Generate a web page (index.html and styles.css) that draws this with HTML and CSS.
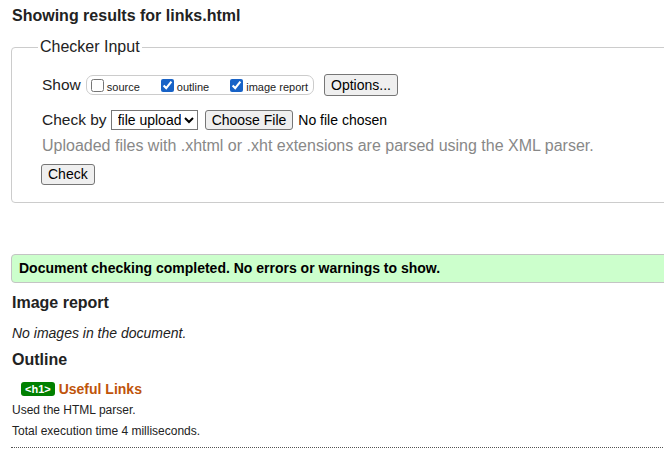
FILE: index.html
```html
<!DOCTYPE html>
<html>
<head>
<meta charset="utf-8">
<title>Showing results for links.html</title>
<link rel="stylesheet" href="styles.css">
</head>
<body>
<div class="page">
  <h2 class="title">Showing results for links.html</h2>
  <fieldset class="checker">
    <legend class="legend">Checker Input</legend>
    <div class="row show-row">
      <span class="label">Show</span>
      <span class="group">
        <label class="opt"><input type="checkbox" class="cb"><span>source</span></label>
        <label class="opt"><input type="checkbox" class="cb" checked><span>outline</span></label>
        <label class="opt"><input type="checkbox" class="cb" checked><span>image report</span></label>
      </span>
      <button class="btn options">Options...</button>
    </div>
    <div class="row by-row">
      <span class="label">Check by</span>
      <select class="sel"><option>file upload</option></select>
      <button class="btn choose">Choose File</button>
      <span class="nofile">No file chosen</span>
    </div>
    <p class="hint">Uploaded files with .xhtml or .xht extensions are parsed using the XML parser.</p>
    <div class="row check-row"><button class="btn check">Check</button></div>
  </fieldset>
  <div class="success">Document checking completed. No errors or warnings to show.</div>
  <h3 class="sub img-head">Image report</h3>
  <p class="noimg">No images in the document.</p>
  <h3 class="sub outline-head">Outline</h3>
  <div class="outline-item"><span class="badge">&lt;h1&gt;</span><span class="heading-text">Useful Links</span></div>
  <p class="meta first">Used the HTML parser.</p>
  <p class="meta">Total execution time 4 milliseconds.</p>
  <hr class="dots">
</div>
</body>
</html>
```
FILE: styles.css
```css
html, body { margin: 0; padding: 0; overflow: hidden; background: #fff; }
body { font-family: "Liberation Sans", Arial, sans-serif; color: #222; }
.page { width: 700px; padding-left: 11px; }

.title { margin: 7px 0 0 1px; font-size: 16px; line-height: 18px; font-weight: bold; color: #222; }

.checker {
  margin: 13px 0 0 0;
  border: 1px solid #ccc;
  border-radius: 4px;
  padding: 0 0 17px 26px;
  min-width: 0;
}
.legend { padding: 0 2px; font-size: 16px; line-height: 18px; color: #222; }

.row { display: flex; align-items: center; padding-left: 4px; }
.label { font-size: 15.5px; line-height: 18px; color: #222; }

.show-row { margin-top: 18px; height: 22px; }
.group {
  display: inline-flex; align-items: center;
  margin-left: 5px; height: 18px;
  border: 1px solid #ccc; border-radius: 7px;
  padding: 0 5px 0 3px;
}
.opt { display: inline-flex; align-items: center; font-size: 11px; line-height: 14px; margin-right: 20px; }
.opt:last-child { margin-right: 0; }
.opt span { margin-top: 3px; }
.cb { width: 13px; height: 13px; margin: 0 3px 0 1px; accent-color: #1762c7; }

.btn {
  font-family: "Liberation Sans", Arial, sans-serif;
  font-size: 14px; line-height: 16px; color: #000;
  background: #efefef; border: 1px solid #767676; border-radius: 3px;
  padding: 2px 6px; margin: 0;
}
.options { margin-left: 10px; }

.by-row { margin-top: 13px; height: 21px; }
.sel {
  margin-left: 4px; font-family: "Liberation Sans", Arial, sans-serif;
  font-size: 14px; height: 20px; width: 87px; color: #000;
  border: 1px solid #767676; border-radius: 0; background: #fff; padding: 0 0 0 2px;
}
.choose { margin-left: 7px; padding: 1px 6px; }
.nofile { margin-left: 5px; font-size: 14px; color: #000; }

.hint { margin: 7px 0 0 0; padding-left: 4px; font-size: 16px; line-height: 18px; color: #888; }

.check-row { margin-top: 9px; padding-left: 3px; }
.check { padding: 1px 6px; line-height: 17px; }

.success {
  margin-top: 51px;
  background: #ccffcc; border: 1px solid #c4c4c4; border-radius: 4px;
  padding: 5px 7px 5px 7px;
  font-size: 14px; line-height: 17px; font-weight: bold; color: #000;
}

.sub { margin: 0 0 0 1px; font-size: 16px; line-height: 20px; font-weight: bold; color: #222; }
.img-head { margin-top: 10px; }
.noimg { margin: 11px 0 0 1px; font-size: 14px; line-height: 18px; font-style: italic; color: #222; }
.outline-head { margin-top: 8px; }

.outline-item { margin: 10px 0 0 10px; display: flex; align-items: center; height: 18px; }
.badge {
  background: #008000; color: #fff; border-radius: 3px;
  font-size: 11px; line-height: 14px; padding: 0 4px; font-weight: bold;
}
.heading-text { margin-left: 4px; font-size: 14px; font-weight: bold; color: #c0540a; }

.meta { margin: 4px 0 0 1px; font-size: 12px; line-height: 16px; color: #222; }
.meta + .meta { margin-top: 5px; }

.dots { margin: 8px 0 0 0; border: 0; border-top: 1px dotted #555; height: 0; }
```
